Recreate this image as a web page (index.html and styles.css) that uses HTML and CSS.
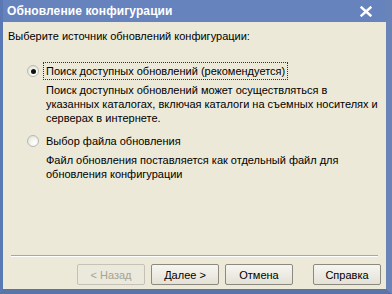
FILE: index.html
```html
<!DOCTYPE html>
<html>
<head>
<meta charset="utf-8">
<link rel="stylesheet" href="styles.css">
</head>
<body>
<div class="window">
  <div class="titlebar">
    <span class="title">Обновление конфигурации</span>
    <svg class="close" width="12" height="11" viewBox="0 0 12 11"><path d="M1.5 1.5 L10.5 9.5 M10.5 1.5 L1.5 9.5" stroke="#fff" stroke-width="2.4" stroke-linecap="square"/></svg>
  </div>
  <div class="content">
    <div class="prompt">Выберите источник обновлений конфигурации:</div>
    <div class="option first">
      <div class="row">
        <span class="radio checked"><span class="dot"></span></span>
        <span class="label focus">Поиск доступных обновлений (рекомендуется)</span>
      </div>
      <div class="desc">Поиск доступных обновлений может осуществляться в<br>указанных каталогах, включая каталоги на съемных носителях и<br>серверах в интернете.</div>
    </div>
    <div class="option second">
      <div class="row">
        <span class="radio"></span>
        <span class="label">Выбор файла обновления</span>
      </div>
      <div class="desc">Файл обновления поставляется как отдельный файл для<br>обновления конфигурации</div>
    </div>
    <div class="spacer"></div>
    <div class="separator"></div>
    <div class="buttons">
      <button class="btn disabled">&lt; Назад</button>
      <button class="btn">Далее &gt;</button>
      <button class="btn">Отмена</button>
      <button class="btn help">Справка</button>
    </div>
  </div>
</div>
</body>
</html>
```
FILE: styles.css
```css
html, body {
  margin: 0;
  padding: 0;
  width: 392px;
  height: 294px;
  overflow: hidden;
  background: #ece9d8;
}
.window {
  box-sizing: border-box;
  width: 392px;
  height: 294px;
  display: flex;
  flex-direction: column;
  border-left: 3px solid #5a78b4;
  border-right: 6px solid #6a84b8;
  border-bottom: 5px solid #5a74a8;
  font-family: "Liberation Sans", Arial, sans-serif;
  font-size: 11px;
  color: #000;
}
.titlebar {
  height: 22px;
  flex: none;
  background: #6683bd;
  display: flex;
  align-items: center;
  justify-content: space-between;
  padding: 0 14px 0 4px;
}
.title {
  color: #fff;
  font-weight: bold;
  font-size: 12px;
  letter-spacing: 0.1px;
}
.close {
  display: block;
}
.content {
  flex: 1;
  background: #ece9d8;
  display: flex;
  flex-direction: column;
  padding: 0 0 0 5px;
}
.prompt {
  margin-top: 7px;
  line-height: 14px;
}
.option {
  padding-left: 19px;
}
.option.first {
  margin-top: 19px;
}
.option.second {
  margin-top: 7px;
}
.row {
  display: flex;
  align-items: center;
  height: 18px;
}
.radio {
  box-sizing: border-box;
  width: 12px;
  height: 12px;
  border-radius: 50%;
  border: 1px solid #b8b8b0;
  background: radial-gradient(circle at 65% 70%, #fff 0%, #f4f4f0 40%, #dcdcd4 100%);
  display: flex;
  align-items: center;
  justify-content: center;
  margin-right: 4px;
}
.dot {
  width: 5px;
  height: 5px;
  border-radius: 50%;
  background: #111;
}
.label {
  line-height: 14px;
  padding: 1px 2px;
  border: 1px solid transparent;
}
.label.focus {
  border: 1px dotted #333;
}
.desc {
  padding-left: 19px;
  margin-top: 3px;
  line-height: 14px;
}
.spacer {
  flex: 1;
}
.separator {
  margin: 0 8px 0 3px;
  height: 0;
  border-top: 1px solid #aca899;
  border-bottom: 1px solid #fff;
}
.buttons {
  display: flex;
  justify-content: flex-end;
  gap: 6px;
  padding: 7px 5px 4px 0;
}
.btn {
  box-sizing: border-box;
  width: 68px;
  height: 21px;
  font-family: "Liberation Sans", Arial, sans-serif;
  font-size: 11px;
  color: #000;
  background: linear-gradient(#f6f5f0, #e4e1d6);
  border: 1px solid #8c8a80;
  border-radius: 2px;
  padding: 0;
}
.btn.disabled {
  color: #a6a394;
  border-color: #c4c2b8;
  background: #ebe8dc;
}
.btn.help {
  margin-left: 14px;
}
```
